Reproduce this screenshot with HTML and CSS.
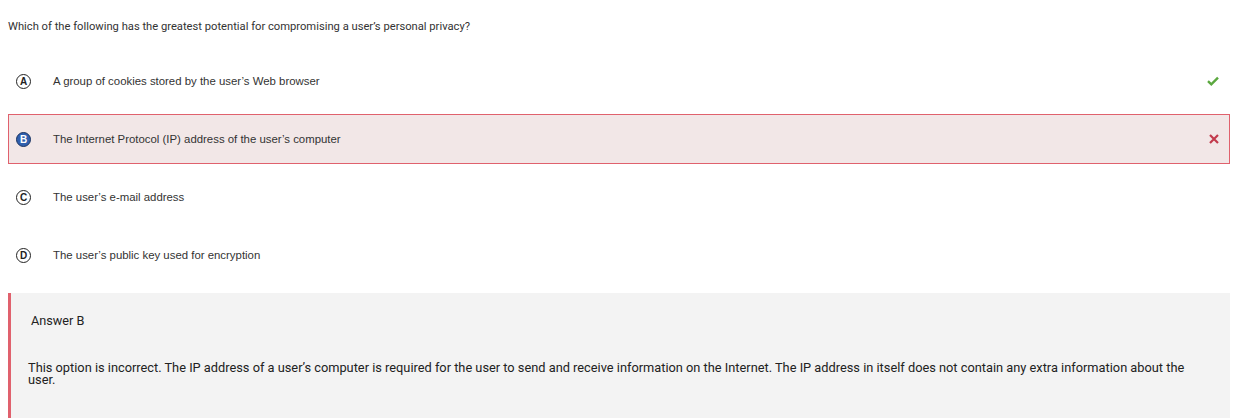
FILE: index.html
```html
<!DOCTYPE html>
<html lang="en">
<head>
<meta charset="utf-8">
<title>Question</title>
<link rel="stylesheet" href="styles.css">
</head>
<body>
<div class="quiz">
  <p class="question">Which of the following has the greatest potential for compromising a user’s personal privacy?</p>
  <ul class="options">
    <li class="option">
      <span class="letter">A</span>
      <span class="label">A group of cookies stored by the user’s Web browser</span>
      <svg class="mark" width="12" height="10" viewBox="0 0 12 10"><path d="M1 5.2 L4.3 8.3 L11 1.6" fill="none" stroke="#5ba83f" stroke-width="2.4"/></svg>
    </li>
    <li class="option wrong">
      <span class="letter selected">B</span>
      <span class="label">The Internet Protocol (IP) address of the user’s computer</span>
      <svg class="mark" width="10" height="10" viewBox="0 0 10 10"><path d="M1 1 L9 9 M9 1 L1 9" fill="none" stroke="#c23a4c" stroke-width="2.2"/></svg>
    </li>
    <li class="option">
      <span class="letter">C</span>
      <span class="label">The user’s e-mail address</span>
    </li>
    <li class="option">
      <span class="letter">D</span>
      <span class="label">The user’s public key used for encryption</span>
    </li>
  </ul>
  <div class="answer">
    <div class="answer-title">Answer B</div>
    <p class="answer-text">This option is incorrect. The IP address of a user’s computer is required for the user to send and receive information on the Internet. The IP address in itself does not contain any extra information about the user.</p>
  </div>
</div>
</body>
</html>
```
FILE: styles.css
```css
html, body {
  margin: 0;
  padding: 0;
  background: #ffffff;
}
body {
  padding: 8px;
  font-family: Roboto, "Liberation Sans", Arial, sans-serif;
  color: #333333;
}
.quiz {
  width: 1222px;
}
.question {
  margin: 11px 0 21px 0;
  font-size: 11.2px;
  line-height: 16px;
  color: #333333;
}
.options {
  list-style: none;
  margin: 0;
  padding: 0;
  display: flex;
  flex-direction: column;
  gap: 8px;
}
.option {
  display: flex;
  align-items: center;
  height: 50px;
  box-sizing: border-box;
  padding: 0 10px 0 7px;
  border: 1px solid transparent;
  font-family: "Liberation Sans", Arial, sans-serif;
  font-size: 11.4px;
  color: #333333;
}
.option.wrong {
  background: #f2e7e7;
  border-color: #e0616d;
}
.letter {
  width: 15px;
  height: 15px;
  box-sizing: border-box;
  border: 1.3px solid #222222;
  border-radius: 50%;
  display: flex;
  align-items: center;
  justify-content: center;
  font-family: "Liberation Sans", Arial, sans-serif;
  font-weight: bold;
  font-size: 10px;
  color: #222222;
  flex: none;
}
.letter.selected {
  background: #2f5fae;
  border-color: #1c3461;
  color: #ffffff;
}
.label {
  margin-left: 22px;
  flex: 1;
}
.mark {
  flex: none;
}
.answer {
  margin-top: 13px;
  background: #f3f3f3;
  border-left: 3px solid #e0616d;
  height: 125px;
  box-sizing: border-box;
  padding: 21px 35px 0 17px;
}
.answer-title {
  margin-left: 3px;
  font-size: 12.7px;
  line-height: 14px;
  color: #222222;
}
.answer-text {
  margin: 34px 0 0 0;
  font-size: 12.8px;
  line-height: 12px;
  color: #222222;
}
```
